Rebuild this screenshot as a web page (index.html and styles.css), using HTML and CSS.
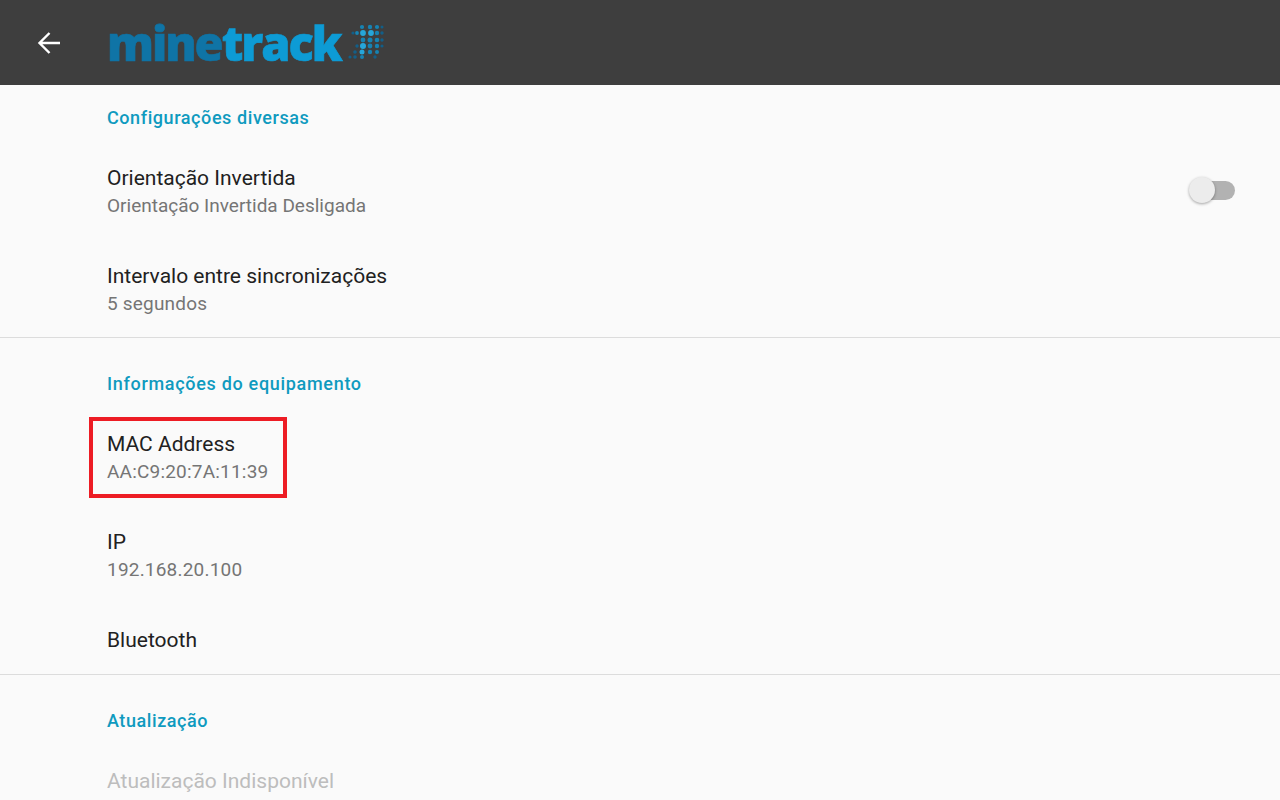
FILE: index.html
```html
<!DOCTYPE html>
<html>

<head>
  <title>Configurações</title>
  <link rel="stylesheet" href="styles.css">
</head>

<body>
  <div class="toolbar">
    <button class="backBtn" aria-label="Voltar">
      <svg width="24" height="24" viewBox="0 0 24 24">
        <path d="M23 12H3M12.5 2L2.5 12l10 10" fill="none" stroke="#fff" stroke-width="2.4" />
      </svg>
    </button>
    <div class="logo">
      <span class="logoText"><span class="logoDark">mine</span><span class="logoLight">track</span></span>
      <svg class="logoDots" width="40" height="38" viewBox="0 0 40 38">
        <g fill="#125f88">
          <circle cx="35" cy="3" r="1.5" /><circle cx="6" cy="9" r="1.6" /><circle cx="35" cy="9" r="1.7" />
          <circle cx="35" cy="16" r="1.7" /><circle cx="10" cy="22" r="1.7" /><circle cx="35" cy="22" r="1.6" />
          <circle cx="3" cy="33" r="1.6" /><circle cx="8" cy="33" r="1.8" /><circle cx="28" cy="33" r="1.7" />
          <circle cx="8" cy="28" r="1.8" />
        </g>
        <g fill="#1683b3">
          <circle cx="15" cy="3" r="2.1" /><circle cx="23" cy="3" r="2.2" /><circle cx="30" cy="3" r="2.1" />
          <circle cx="10" cy="9" r="1.9" /><circle cx="30" cy="9" r="2.2" />
          <circle cx="16" cy="16" r="2.4" /><circle cx="23" cy="16" r="2.5" /><circle cx="30" cy="16" r="2.3" />
          <circle cx="23" cy="22" r="2.4" /><circle cx="30" cy="22" r="2.2" />
          <circle cx="23" cy="28" r="2.2" /><circle cx="30" cy="28" r="2" /><circle cx="15" cy="33" r="2" />
        </g>
        <g fill="#26a6da">
          <circle cx="16" cy="9" r="2.9" /><circle cx="24" cy="9" r="2.9" /><circle cx="16" cy="22" r="3" /><circle cx="15" cy="28" r="2.5" />
        </g>
      </svg>
    </div>
  </div>

  <main>
    <section class="group first">
      <h2 class="groupTitle">Configurações diversas</h2>
      <div class="item switchItem">
        <div>
          <div class="itemTitle">Orientação Invertida</div>
          <div class="itemSummary">Orientação Invertida Desligada</div>
        </div>
        <div class="switch"><span class="thumb"></span></div>
      </div>
      <div class="item">
        <div class="itemTitle">Intervalo entre sincronizações</div>
        <div class="itemSummary spaced">5 segundos</div>
      </div>
    </section>

    <section class="group">
      <h2 class="groupTitle wide">Informações do equipamento</h2>
      <div class="item marked">
        <div class="itemTitle">MAC Address</div>
        <div class="itemSummary spaced">AA:C9:20:7A:11:39</div>
        <div class="highlight"></div>
      </div>
      <div class="item">
        <div class="itemTitle">IP</div>
        <div class="itemSummary spaced">192.168.20.100</div>
      </div>
      <div class="item">
        <div class="itemTitle">Bluetooth</div>
      </div>
    </section>

    <section class="group last">
      <h2 class="groupTitle">Atualização</h2>
      <div class="item">
        <div class="itemTitle disabled">Atualização Indisponível</div>
      </div>
    </section>
  </main>
</body>

</html>
```

FILE: styles.css
```css
html,
body {
  height: 100%;
  margin: 0;
  padding: 0;
  overflow: hidden;
}

body {
  font-family: Roboto, "Liberation Sans", sans-serif;
  background-color: #fafafa;
}

/* Top bar */
.toolbar {
  height: 85px;
  display: flex;
  align-items: center;
  padding-left: 37px;
  background-color: #3e3e3e;
  box-sizing: border-box;
}

.backBtn {
  width: 24px;
  height: 24px;
  padding: 0;
  border: none;
  background: none;
}

.logo {
  display: flex;
  align-items: center;
  margin-left: 46px;
  margin-top: 1px;
  filter: blur(0.6px);
}

.logoText {
  font-family: "Open Sans", sans-serif;
  font-weight: 800;
  font-size: 47px;
  line-height: 50px;
  letter-spacing: -2.05px;
  -webkit-text-stroke: 0.6px;
}

.logoDark {
  color: #0f74a6;
}

.logoLight {
  color: #0d9bd5;
}

.logoDots {
  margin-left: 6px;
}

/* Settings list */
.group {
  padding: 32px 45px 20px 107px;
  border-bottom: 1px solid #dcdcdc;
}

.group.first {
  padding-top: 19px;
  padding-bottom: 19px;
}

.group.last {
  border-bottom: none;
}

.groupTitle {
  margin: 0 0 32px;
  font-size: 18px;
  font-weight: 500;
  line-height: 28px;
  letter-spacing: 0.58px;
  color: #0f9abf;
}

.groupTitle.wide {
  letter-spacing: 0.69px;
}

.item {
  margin-bottom: 42px;
}

.item:last-child {
  margin-bottom: 0;
}

.itemTitle {
  font-size: 21px;
  line-height: 28px;
  color: #212121;
}

.itemTitle.disabled {
  color: #bdbdbd;
}

.itemSummary {
  font-size: 19px;
  line-height: 28px;
  color: #757575;
}

.itemSummary.spaced {
  letter-spacing: 0.2px;
}

.switchItem {
  display: flex;
  justify-content: space-between;
  align-items: center;
}

.switch {
  position: relative;
  width: 34px;
  height: 19px;
  margin-bottom: 3px;
  border-radius: 10px;
  background-color: #b2b2b2;
}

.thumb {
  position: absolute;
  left: -12px;
  top: -4px;
  width: 26px;
  height: 26px;
  border-radius: 50%;
  background-color: #ececec;
  box-shadow: 0 1px 3px rgba(0, 0, 0, 0.35);
}

/* Red box drawn over the MAC address row */
.marked {
  position: relative;
}

.highlight {
  position: absolute;
  left: -18px;
  top: -13px;
  width: 190px;
  height: 73px;
  border: 4px solid #ed1c24;
}
```
